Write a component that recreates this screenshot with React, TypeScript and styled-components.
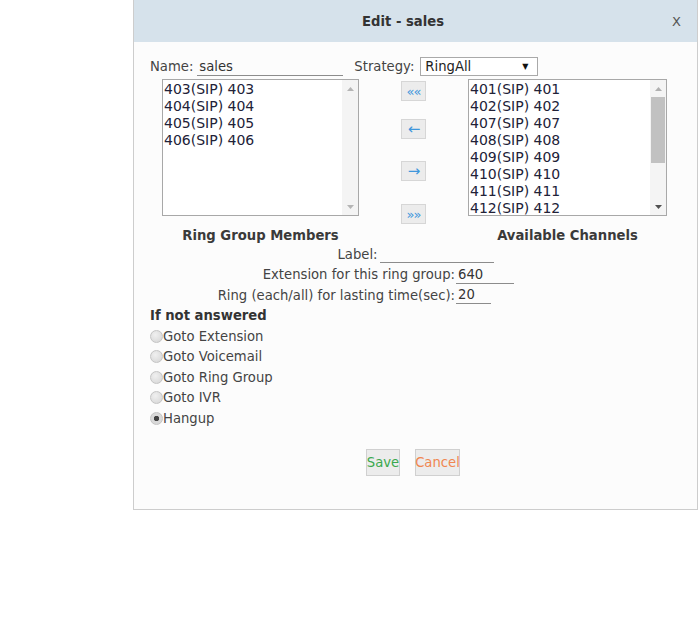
import React from "react";
import styled, { createGlobalStyle } from "styled-components";

const GlobalStyle = createGlobalStyle`
  html, body { margin: 0; padding: 0; background: #ffffff; }
  body {
    font-family: "DejaVu Sans", Verdana, sans-serif;
    font-size: 13.2px;
    color: #3a3a3a;
  }
`;

const Page = styled.div`
  padding-left: 133px;
`;

const Dialog = styled.div`
  width: 563px;
  height: 509px;
  border: 1px solid #cdcdcd;
  border-top: none;
  background: #fcfcfc;
  display: flex;
  flex-direction: column;
`;

const Header = styled.div`
  height: 42px;
  background: #d6e2eb;
  display: flex;
  align-items: center;
`;

const Title = styled.div`
  flex: 1;
  text-align: center;
  font-weight: bold;
  color: #333;
`;

const Close = styled.span`
  margin-right: 16px;
  color: #555;
  font-size: 13px;
`;

const Body = styled.div`
  padding: 15px 16px 0 16px;
  display: flex;
  flex-direction: column;
`;

const TopRow = styled.div`
  display: flex;
  align-items: center;
  height: 19px;
`;

const FieldLabel = styled.span<{ $ml?: number }>`
  margin-left: ${(p) => p.$ml ?? 0}px;
  color: #444;
  white-space: nowrap;
`;

const LineInput = styled.div<{ $w: number; $ml?: number }>`
  width: ${(p) => p.$w}px;
  margin-left: ${(p) => p.$ml ?? 0}px;
  height: 18px;
  box-sizing: border-box;
  border-bottom: 1px solid #8c8c8c;
  padding-left: 2px;
  line-height: 18px;
  color: #333;
`;

const Select = styled.div`
  margin-left: 6px;
  width: 118px;
  height: 19px;
  box-sizing: border-box;
  border: 1px solid #a9a9a9;
  background: #fff;
  display: flex;
  align-items: center;
  justify-content: space-between;
  padding: 0 9px 0 4px;
  color: #222;
`;

const Caret = styled.span`
  font-size: 8px;
  color: #111;
`;

const ListsRow = styled.div`
  display: flex;
  margin: 3px 0 0 12px;
`;

const ListColumn = styled.div<{ $w: number }>`
  width: ${(p) => p.$w}px;
  display: flex;
  flex-direction: column;
`;

const ListBox = styled.div`
  height: 137px;
  box-sizing: border-box;
  border: 1px solid #a8a8a8;
  background: #fff;
  display: flex;
`;

const Items = styled.div`
  flex: 1;
  padding: 1px 0 0 1px;
  font-size: 14px;
  color: #222238;
`;

const Item = styled.div`
  height: 17px;
  line-height: 17px;
  white-space: nowrap;
`;

const Scrollbar = styled.div`
  width: 16px;
  background: #f4f4f4;
  display: flex;
  flex-direction: column;
  align-items: center;
`;

const ScrollArrow = styled.div`
  height: 17px;
  display: flex;
  align-items: center;
  justify-content: center;
`;

const Track = styled.div`
  flex: 1;
  width: 100%;
  display: flex;
  flex-direction: column;
  align-items: center;
`;

const Thumb = styled.div`
  width: 14px;
  height: 66px;
  background: #c1c1c1;
`;

const Caption = styled.div`
  margin-top: 12px;
  line-height: 16px;
  text-align: center;
  font-weight: bold;
  color: #3a3a3a;
  white-space: nowrap;
`;

const ButtonCol = styled.div`
  width: 25px;
  margin: 0 42px;
  display: flex;
  flex-direction: column;
`;

const MoveButton = styled.div<{ $mt: number; $fs: number }>`
  margin-top: ${(p) => p.$mt}px;
  width: 25px;
  height: 20px;
  box-sizing: border-box;
  border: 1px solid #d6d6d6;
  background: #ececec;
  color: #3f97dc;
  font-size: ${(p) => p.$fs}px;
  letter-spacing: -1px;
  display: flex;
  align-items: center;
  justify-content: center;
`;

const CenterRow = styled.div`
  height: 20.5px;
  display: flex;
  align-items: center;
  justify-content: center;
`;

const FormGrid = styled.div`
  display: grid;
  grid-template-columns: 305px auto;
  grid-auto-rows: 20.5px;
  align-items: center;
`;

const GridLabel = styled.div`
  text-align: right;
  color: #444;
  white-space: nowrap;
`;

const SectionTitle = styled.div`
  height: 20.5px;
  line-height: 20.5px;
  font-weight: bold;
  color: #333;
`;

const RadioRow = styled.div`
  height: 20.5px;
  display: flex;
  align-items: center;
  color: #444;
`;

const RadioDot = styled.span<{ $checked?: boolean }>`
  width: 13px;
  height: 13px;
  border-radius: 50%;
  box-sizing: border-box;
  border: 1px solid #c4c4c4;
  background: ${(p) =>
    p.$checked
      ? "radial-gradient(circle, #444 0 2.4px, #d9d9d9 3px)"
      : "radial-gradient(circle at 40% 35%, #f0f0f0, #d4d4d4)"};
  flex-shrink: 0;
`;

const Actions = styled.div`
  margin-top: 20.5px;
  padding-right: 5px;
  display: flex;
  justify-content: center;
  gap: 15px;
`;

const ActionButton = styled.div<{ $w: number; $color: string }>`
  width: ${(p) => p.$w}px;
  height: 27px;
  box-sizing: border-box;
  border: 1px solid #d0d0d0;
  background: #ececec;
  color: ${(p) => p.$color};
  display: flex;
  align-items: center;
  justify-content: center;
`;

const Tri = ({ up, color }: { up?: boolean; color: string }) => (
  <svg width="7" height="4" viewBox="0 0 7 4">
    <path d={up ? "M0 4 L3.5 0 L7 4 Z" : "M0 0 L3.5 4 L7 0 Z"} fill={color} />
  </svg>
);

const members = ["403(SIP) 403", "404(SIP) 404", "405(SIP) 405", "406(SIP) 406"];
const available = [
  "401(SIP) 401",
  "402(SIP) 402",
  "407(SIP) 407",
  "408(SIP) 408",
  "409(SIP) 409",
  "410(SIP) 410",
  "411(SIP) 411",
  "412(SIP) 412",
];

const options = [
  { label: "Goto Extension" },
  { label: "Goto Voicemail" },
  { label: "Goto Ring Group" },
  { label: "Goto IVR" },
  { label: "Hangup", checked: true },
];

export default function App() {
  return (
    <>
      <GlobalStyle />
      <Page>
        <Dialog>
          <Header>
            <Title>Edit - sales</Title>
            <Close>X</Close>
          </Header>
          <Body>
            <TopRow>
              <FieldLabel>Name:</FieldLabel>
              <LineInput $w={146} $ml={4}>sales</LineInput>
              <FieldLabel $ml={11}>Strategy:</FieldLabel>
              <Select>
                <span>RingAll</span>
                <Caret>▼</Caret>
              </Select>
            </TopRow>
            <ListsRow>
              <ListColumn $w={197}>
                <ListBox>
                  <Items>
                    {members.map((m) => (
                      <Item key={m}>{m}</Item>
                    ))}
                  </Items>
                  <Scrollbar>
                    <ScrollArrow>
                      <Tri up color="#b5b5b5" />
                    </ScrollArrow>
                    <Track />
                    <ScrollArrow>
                      <Tri color="#b5b5b5" />
                    </ScrollArrow>
                  </Scrollbar>
                </ListBox>
                <Caption>Ring Group Members</Caption>
              </ListColumn>
              <ButtonCol>
                <MoveButton $mt={2} $fs={13}>««</MoveButton>
                <MoveButton $mt={18} $fs={15}>←</MoveButton>
                <MoveButton $mt={22} $fs={15}>→</MoveButton>
                <MoveButton $mt={23} $fs={13}>»»</MoveButton>
              </ButtonCol>
              <ListColumn $w={199}>
                <ListBox>
                  <Items>
                    {available.map((m) => (
                      <Item key={m}>{m}</Item>
                    ))}
                  </Items>
                  <Scrollbar>
                    <ScrollArrow>
                      <Tri up color="#b0b0b0" />
                    </ScrollArrow>
                    <Track>
                      <Thumb />
                    </Track>
                    <ScrollArrow>
                      <Tri color="#505050" />
                    </ScrollArrow>
                  </Scrollbar>
                </ListBox>
                <Caption>Available Channels</Caption>
              </ListColumn>
            </ListsRow>
            <CenterRow>
              <FieldLabel>Label:</FieldLabel>
              <LineInput $w={114} $ml={2} />
            </CenterRow>
            <FormGrid>
              <GridLabel>Extension for this ring group:</GridLabel>
              <LineInput $w={58} $ml={1}>640</LineInput>
              <GridLabel>Ring (each/all) for lasting time(sec):</GridLabel>
              <LineInput $w={35} $ml={1}>20</LineInput>
            </FormGrid>
            <SectionTitle>If not answered</SectionTitle>
            {options.map((o) => (
              <RadioRow key={o.label}>
                <RadioDot $checked={o.checked} />
                {o.label}
              </RadioRow>
            ))}
            <Actions>
              <ActionButton $w={34} $color="#3aa84e">Save</ActionButton>
              <ActionButton $w={45} $color="#f08650">Cancel</ActionButton>
            </Actions>
          </Body>
        </Dialog>
      </Page>
    </>
  );
}
